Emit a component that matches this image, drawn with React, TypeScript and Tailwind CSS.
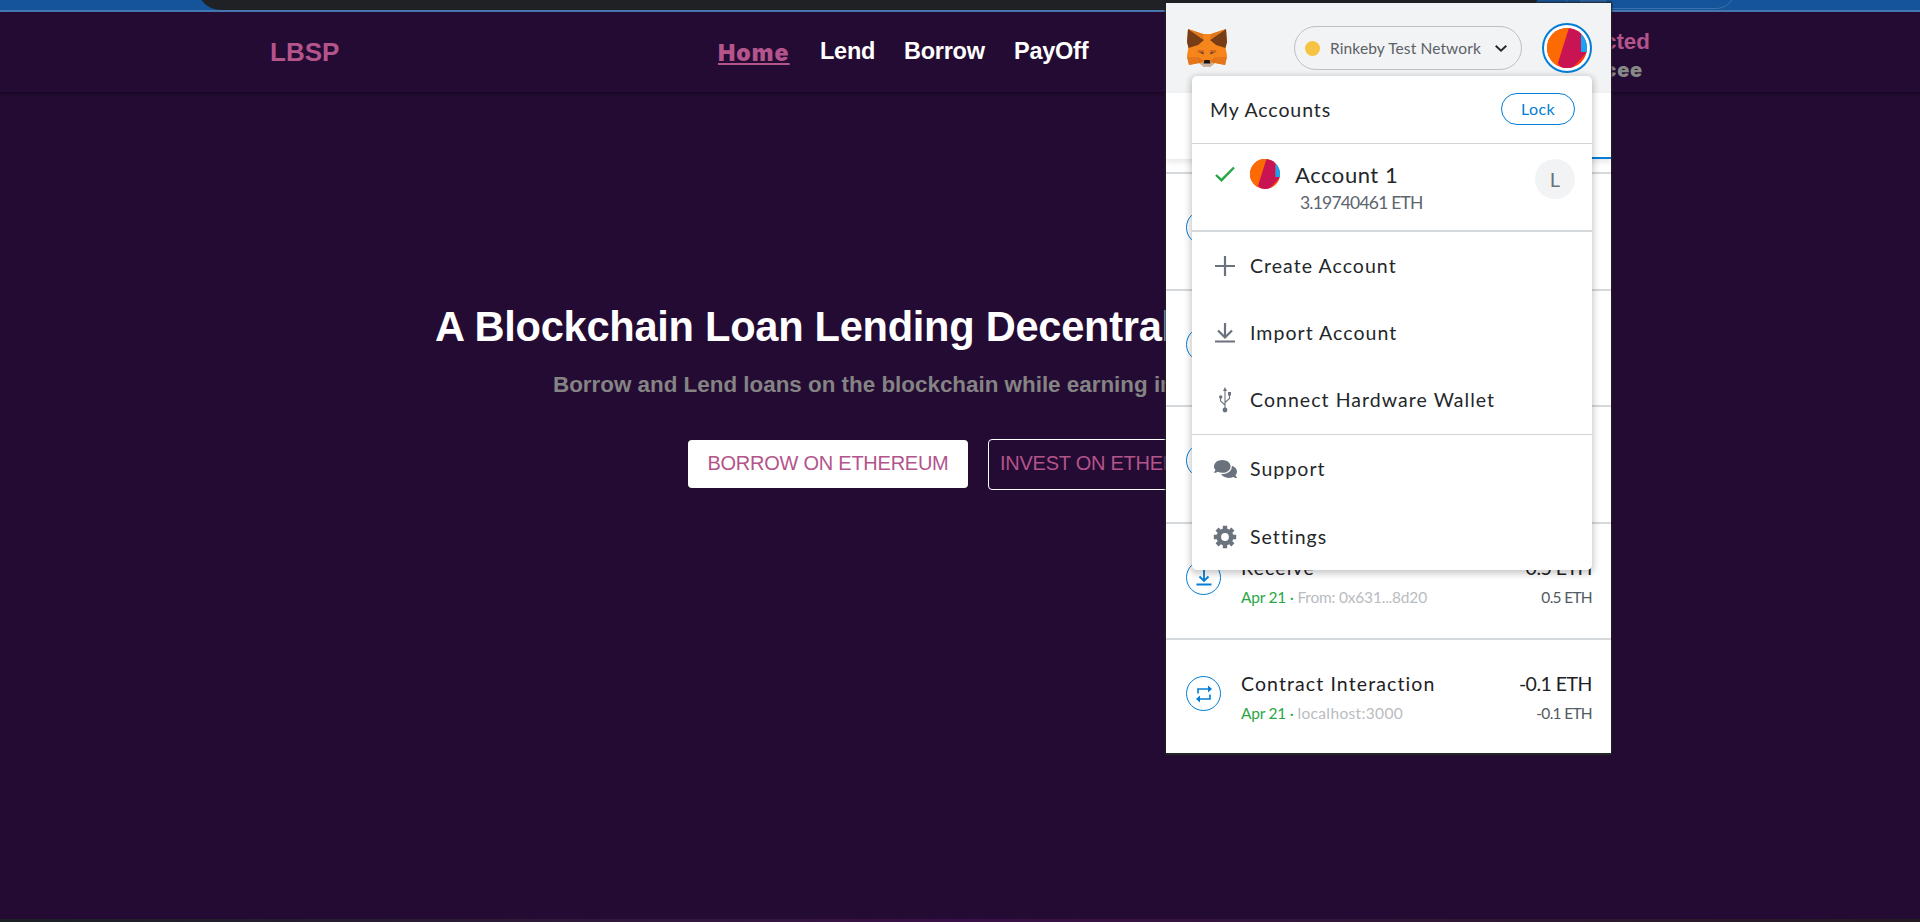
import React from "react";
import { FaComments } from "react-icons/fa";

function Avatar({ className }: { className: string }) {
  return (
    <svg viewBox="0 0 40 40" className={className}>
      <defs>
        <clipPath id="disc">
          <circle cx="20" cy="20" r="20" />
        </clipPath>
      </defs>
      <g clipPath="url(#disc)">
        <rect width="40" height="40" fill="#fc3a0c" />
        <path d="M0 0H22L11 35L10 40H0Z" fill="#fb6a03" />
        <path d="M22 0H34V24H40L26 39L24 42H16L11 35Z" fill="#c81453" />
        <path d="M34 0H40V24H34Z" fill="#18a4f2" />
      </g>
    </svg>
  );
}

function Fox() {
  return (
    <svg viewBox="0 0 42 40" className="h-10 w-[42px]">
      <path d="M2 1L17 6H25L40 1L41 14L39.500 19L41 28L39 37L29 35L24 39H18L13 35L3 37L1 28L2.500 19L1 14Z" fill="#f6851b" />
      <path d="M2 1L18 12L12 17L2.500 20L1 14Z" fill="#763d16" />
      <path d="M40 1L24 12L30 17L39.500 20L41 14Z" fill="#763d16" />
      <path d="M2 1L17 6L18 12Z" fill="#e2761b" />
      <path d="M40 1L25 6L24 12Z" fill="#e2761b" />
      <path d="M11.500 22L18 22L17.500 26L12 24.500Z" fill="#d7681a" />
      <path d="M30.500 22L24 22L24.500 26L30 24.500Z" fill="#d7681a" />
      <path d="M1 29H12L13 35L3 37Z" fill="#e4761b" />
      <path d="M41 29H30L29 35L39 37Z" fill="#e4761b" />
      <path d="M12 29L18 33L13 35Z" fill="#e06f1a" />
      <path d="M30 29L24 33L29 35Z" fill="#e06f1a" />
      <path d="M13.500 24L17.500 24.500L17.500 26.500Z" fill="#3c3b42" />
      <path d="M28.500 24L24.500 24.500L24.500 26.500Z" fill="#3c3b42" />
      <path d="M14 35.500L18 34H24L28 35.500L24 39H18Z" fill="#c9b3a3" />
      <path d="M18.500 32H23.500L24.500 35.500H17.500Z" fill="#161616" />
    </svg>
  );
}

function NavLink({ children, className }: { children: React.ReactNode; className: string }) {
  return (
    <a className={"whitespace-nowrap text-[23.5px] leading-7 font-bold tracking-[-0.25px] text-white " + className}>
      {children}
    </a>
  );
}

function ReceiveIcon() {
  return (
    <svg viewBox="0 0 20 20" className="size-5" fill="none" stroke="#037dd6" strokeWidth="1.8">
      <path d="M10 1V14M5.500 9.500L10 14L14.500 9.500M2.500 17.500H17.500" />
    </svg>
  );
}

function InteractionIcon() {
  return (
    <svg viewBox="0 0 20 20" className="size-5" fill="none" stroke="#037dd6" strokeWidth="1.6">
      <path d="M4 9.500V5H15M16 10.500V15H5" />
      <path d="M14 1.500L18 5L14 8.500ZM6 11.500L2 15L6 18.500Z" fill="#037dd6" stroke="none" />
    </svg>
  );
}

function GearIcon() {
  return (
    <svg viewBox="-12 -12 24 24" className="size-6" fill="none" stroke="#6a737d">
      <circle r="6.200" strokeWidth="4.600" />
      <path
        d="M0 -7.500V-11.200M0 7.500V11.200M-7.500 0H-11.200M7.500 0H11.200M5.300 -5.300L7.900 -7.900M-5.300 -5.300L-7.900 -7.900M5.300 5.300L7.900 7.900M-5.300 5.300L-7.900 7.900"
        strokeWidth="4.400"
      />
    </svg>
  );
}

type Activity = { title: string; from: string; amount: string; icon: React.ReactNode };

const activities: Activity[] = [
  { title: "", from: "", amount: "", icon: null },
  { title: "", from: "", amount: "", icon: null },
  { title: "", from: "", amount: "", icon: null },
  { title: "Receive", from: "From: 0x631...8d20", amount: "0.5 ETH", icon: <ReceiveIcon /> },
  { title: "Contract Interaction", from: "localhost:3000", amount: "-0.1 ETH", icon: <InteractionIcon /> },
];

function ActivityRow({ item }: { item: Activity }) {
  return (
    <div className="flex h-[116.5px] shrink-0 border-t-2 border-[#d6d9dc] pr-[19px] pl-5">
      <div className="mt-9 flex size-[35px] shrink-0 items-center justify-center rounded-full border-[1.5px] border-[#037dd6]">
        {item.icon}
      </div>
      {item.title && (
        <div className="mt-[30px] ml-5 flex min-w-0 flex-1 flex-col whitespace-nowrap">
          <div className="flex justify-between text-[19.5px] leading-7 text-[#1e2124]">
            <span className="tracking-[1.1px]">{item.title}</span>
            <span className="tracking-[-0.5px]">{item.amount}</span>
          </div>
          <div className="mt-[3px] flex justify-between text-[15.5px] leading-6">
            <span className="flex gap-1 text-[#b9bcc0]">
              <span className="tracking-[-0.25px] text-[#28a745]">Apr 21 ·</span>
              <span className={item.title === "Receive" ? "tracking-[-0.2px]" : "tracking-[0.35px]"}>{item.from}</span>
            </span>
            <span className="tracking-[-0.7px] text-[#535a61]">{item.amount}</span>
          </div>
        </div>
      )}
    </div>
  );
}

function MenuItem({ icon, label, className }: { icon: React.ReactNode; label: string; className: string }) {
  return (
    <div className={"flex items-center pl-[21px] " + className}>
      <span className="flex w-6 shrink-0 items-center justify-center text-[#6a737d]">{icon}</span>
      <span className="ml-[13px] whitespace-nowrap text-[19.5px] tracking-[1.05px] text-[#24272a]">{label}</span>
    </div>
  );
}

function AccountMenu() {
  return (
    <div className="absolute top-[73px] left-[26px] flex h-[494px] w-[400px] flex-col rounded-[5px] bg-white shadow-[0_2px_6px_2px_rgba(0,0,0,0.2)]">
      <div className="flex h-[68px] items-start justify-between border-b border-[#d2d4d6] pr-[17px] pl-[18px]">
        <span className="mt-5 text-[19.5px] leading-7 tracking-[0.9px] text-[#24272a]">My Accounts</span>
        <span className="mt-[17px] flex h-8 w-[74px] items-center justify-center rounded-full border border-[#037dd6] text-[16px] tracking-[0.4px] text-[#037dd6]">
          Lock
        </span>
      </div>
      <div className="flex h-[88px] border-b-2 border-[#d6d9dc] pr-[17px] pl-[23px]">
        <svg viewBox="0 0 20 16" className="mt-[22px] h-4 w-5" fill="none" stroke="#28a745" strokeWidth="2.4">
          <path d="M1 9L6.500 14.200L19 1.500" />
        </svg>
        <Avatar className="mt-[15px] ml-[15px] size-[30px]" />
        <div className="ml-[15px] flex flex-1 flex-col">
          <span className="mt-[17px] text-[22px] leading-7 tracking-[0.55px] text-[#24272a]">Account 1</span>
          <span className="ml-[5px] text-[17.5px] leading-7 tracking-[-0.8px] text-[#5d656d]">3.19740461 ETH</span>
        </div>
        <span className="mt-[15px] flex size-10 items-center justify-center rounded-full bg-[#f2f3f4] text-xl text-[#6a737d]">L</span>
      </div>
      <MenuItem
        label="Create Account"
        className="h-[67px]"
        icon={
          <svg viewBox="0 0 20 20" className="size-5" stroke="#6a737d" strokeWidth="2.2">
            <path d="M10 0V20M0 10H20" />
          </svg>
        }
      />
      <MenuItem
        label="Import Account"
        className="h-[68px]"
        icon={
          <svg viewBox="0 0 20 20" className="size-5" fill="none" stroke="#6a737d" strokeWidth="2.2">
            <path d="M10 0V14M3 7.500L10 14.500L17 7.500M0 18.500H20" />
          </svg>
        }
      />
      <MenuItem
        label="Connect Hardware Wallet"
        className="h-[68px] border-b border-[#d2d4d6] pb-px"
        icon={
          <svg viewBox="0 0 12 26" className="h-[26px] w-3" fill="none" stroke="#6a737d" strokeWidth="1.1">
            <path d="M6 3V22M6 18L1.500 14V10M6 15.500L10.500 11.500V7" />
            <circle cx="6" cy="23" r="2.400" fill="#6a737d" stroke="none" />
            <circle cx="1.700" cy="10" r="1.700" fill="#6a737d" stroke="none" />
            <path d="M9 5H12V8.500H9ZM6 0L8 4H4Z" fill="#6a737d" stroke="none" />
          </svg>
        }
      />
      <MenuItem label="Support" className="h-[68px]" icon={<FaComments className="ml-px size-6" />} />
      <MenuItem label="Settings" className="h-[67px] pt-px" icon={<GearIcon />} />
    </div>
  );
}

function WalletPopup() {
  return (
    <div className="absolute top-[3px] left-[1166px] h-[750px] w-[445px] bg-white font-['Lato',sans-serif] shadow-[0_0_2px_1px_#202124,0_2px_1px_0_#2b2b2b]">
      <div className="flex h-full flex-col overflow-hidden">
        <div className="flex h-[90px] shrink-0 items-start bg-[#f2f3f4] pr-[19px] pl-5">
          <div className="mt-[25px]">
            <Fox />
          </div>
          <div className="mt-[23px] ml-auto flex h-11 w-[228px] items-center rounded-full border border-[#bbc0c5] pr-[14px] pl-[10px]">
            <span className="size-[15px] rounded-full bg-[#f6c343]" />
            <span className="ml-[10px] pt-px text-[15.5px] tracking-[0.12px] whitespace-nowrap text-[#5b6168]">
              Rinkeby Test Network
            </span>
            <svg viewBox="0 0 12 7" className="ml-auto h-[7px] w-3" fill="none" stroke="#24272a" strokeWidth="1.9">
              <path d="M0.700 0.700L6 5.600L11.300 0.700" />
            </svg>
          </div>
          <div className="mt-5 ml-5 flex size-[50px] items-center justify-center rounded-full border-2 border-[#037dd6] bg-white">
            <Avatar className="size-10" />
          </div>
        </div>
        <div className="relative flex h-[66px] shrink-0 justify-end bg-white shadow-[0_3px_6px_rgba(0,0,0,0.1)]">
          <div className="h-full w-1/2 border-b-2 border-[#037dd6]" />
        </div>
        <div className="flex flex-col pt-[13px]">
          {activities.map((item, i) => (
            <ActivityRow key={i} item={item} />
          ))}
        </div>
      </div>
      <AccountMenu />
    </div>
  );
}

export default function App() {
  return (
    <div className="relative flex h-[922px] w-[1920px] flex-col overflow-hidden bg-[#240b33] font-['Liberation_Sans',Arial,sans-serif]">
      <div className="flex h-3 shrink-0 overflow-hidden border-b-2 border-[#4a7ab5] bg-[#15549a] pl-[197px]">
        <div className="-mt-[30px] h-[39.5px] w-[1345px] rounded-b-[24px] bg-[#202124]" />
        <div className="-mt-[31px] ml-[20px] flex h-[40px] w-[174px] items-end rounded-full border border-[#3a70ab] pl-[14px]">
          <div className="size-8 rounded-full border border-[#3a70ab] bg-[#2a63a2]" />
        </div>
      </div>
      <header className="flex h-[81px] shrink-0 items-start border-b border-[#1a0626] pl-[270px] shadow-[0_1px_3px_rgba(0,0,0,0.35)]">
        <div className="mt-6 w-[448px] text-[26px] leading-8 font-bold text-[#b3548b]">LBSP</div>
        <nav className="flex w-[842px] pt-[25px]">
          <span className="mt-0.5 w-[102px] whitespace-nowrap font-['Inter','Liberation_Sans',sans-serif] text-[23px] leading-7 font-black tracking-[1.1px] text-[#b3548b] underline decoration-2 underline-offset-2">
            Home
          </span>
          <NavLink className="w-[84px]">Lend</NavLink>
          <NavLink className="w-[110px]">Borrow</NavLink>
          <NavLink className="">PayOff</NavLink>
        </nav>
        <div className="flex w-[90px] flex-col items-end pt-4 whitespace-nowrap">
          <span className="text-[22.4px] leading-7 font-bold text-[#b3548b]">Connected</span>
          <span className="mr-[7px] font-['Inter','Liberation_Sans',sans-serif] text-[20px] leading-7 font-black tracking-[0.8px] text-[#888888]">
            0xcee
          </span>
        </div>
      </header>
      <main className="flex flex-col whitespace-nowrap">
        <h1 className="mt-[209px] ml-[435px] text-[41.6px] leading-[50px] font-bold tracking-[-0.27px] text-white">
          A Blockchain Loan Lending Decentralized
        </h1>
        <p className="mt-[19px] ml-[553px] text-[22.4px] leading-7 font-bold text-[#848484]">
          Borrow and Lend loans on the blockchain while earning interest
        </p>
        <div className="mt-[40px] ml-[688px] flex items-start gap-5 text-[20px] tracking-[-0.25px]">
          <button className="mt-px h-12 w-[280px] shrink-0 rounded bg-white pb-0.5 text-[#b3548b]">BORROW ON ETHEREUM</button>
          <button className="h-[51px] w-[280px] shrink-0 rounded border border-white pb-[3px] pl-[11px] text-left text-[#b3548b]">
            INVEST ON ETHEREUM
          </button>
        </div>
      </main>
      <div className="mt-auto h-[3px] shrink-0 bg-gradient-to-r from-[#1b2024] via-[#3a1048] to-[#241a22]" />
      <WalletPopup />
    </div>
  );
}
